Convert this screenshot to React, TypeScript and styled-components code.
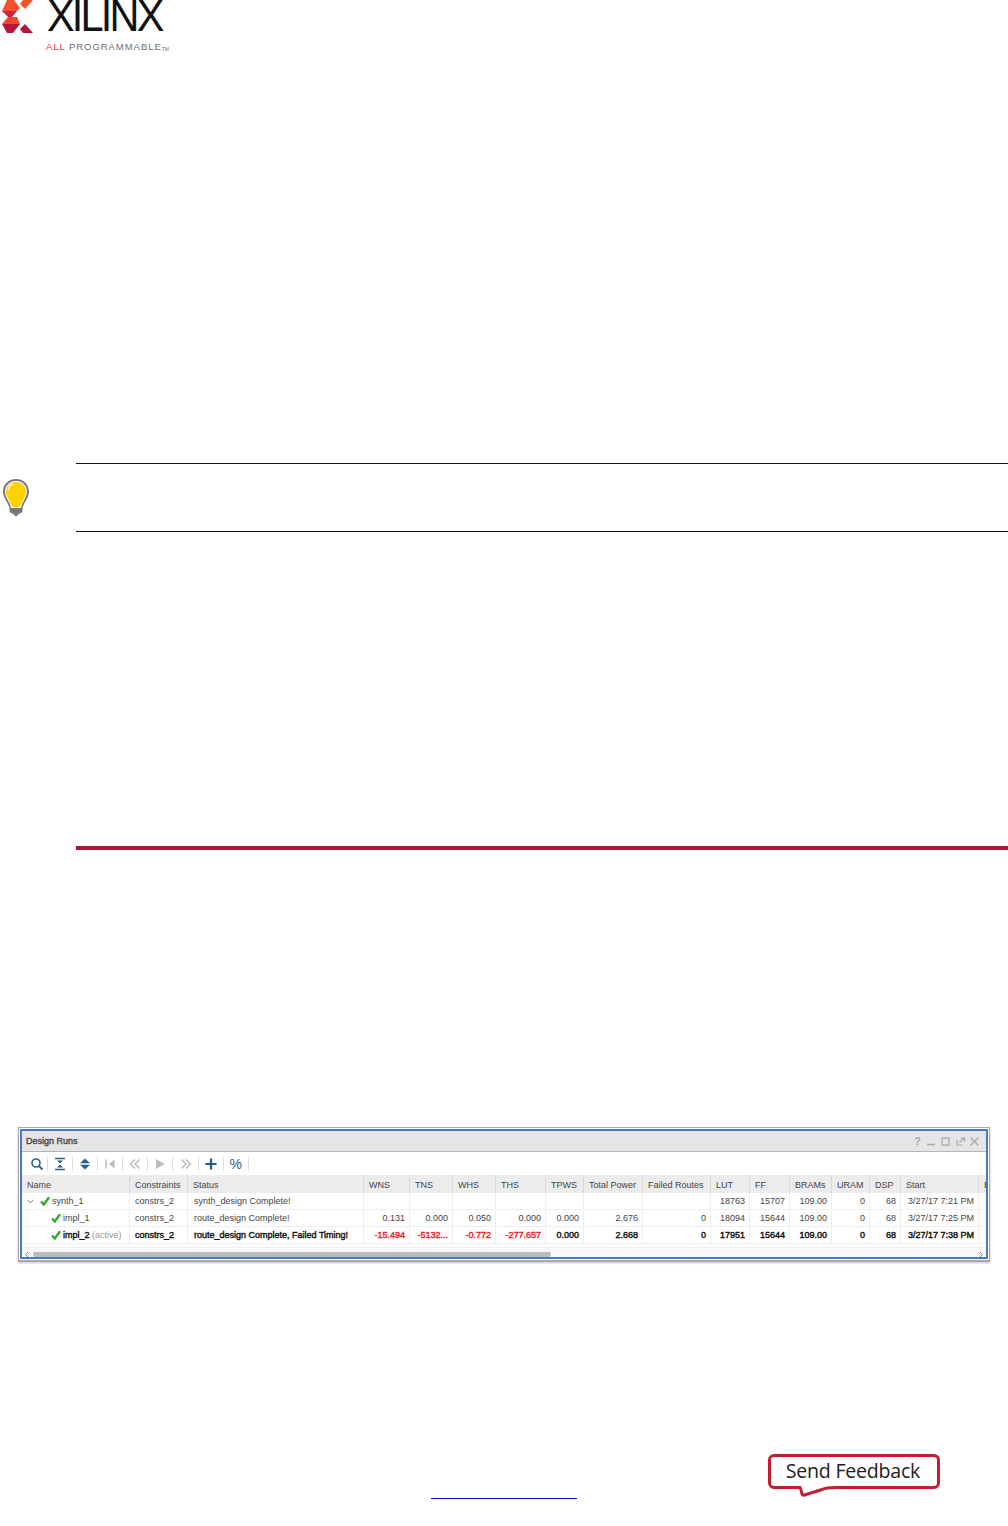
import React from "react";
import styled, { createGlobalStyle } from "styled-components";

const Global = createGlobalStyle`
  html, body { margin: 0; padding: 0; background: #fff; }
  body { font-family: "Liberation Sans", Arial, sans-serif; }
`;

const Page = styled.div`
  width: 1008px;
  height: 1526px;
  overflow: hidden;
  background: #fff;
  display: flex;
  flex-direction: column;
`;

const Header = styled.header`
  height: 52px;
  display: flex;
  align-items: flex-start;
  gap: 12px;
`;
const LogoMark = styled.svg`
  width: 34px;
  height: 34px;
  flex: none;
`;
const Wordmark = styled.div`
  width: 126px;
  display: flex;
  flex-direction: column;
`;
const LogoName = styled.div`
  font-size: 45px;
  line-height: 32px;
  height: 32px;
  letter-spacing: -3px;
  color: #111;
  white-space: nowrap;
  margin-left: 1px;
  transform: scaleX(0.92);
  transform-origin: left center;
`;
const LogoTag = styled.div`
  margin-top: 10px;
  font-size: 9.5px;
  line-height: 10px;
  letter-spacing: 0.95px;
  color: #6d6e71;
  white-space: nowrap;
`;
const TagRed = styled.span`color: #e8322c;`;
const TagTm = styled.span`font-size: 5px; vertical-align: -1px; letter-spacing: 0;`;

const Tip = styled.section`
  margin-top: 411px;
  display: flex;
  align-items: center;
`;
const TipIcon = styled.div`
  width: 76px;
  flex: none;
  padding-left: 2px;
  box-sizing: border-box;
  display: flex;
`;
const TipBox = styled.div`
  flex: 1;
  height: 67px;
  border-top: 1px solid #111;
  border-bottom: 1px solid #111;
`;

const RedRule = styled.hr`
  margin: 314px 0 0 76px;
  border: none;
  height: 4px;
  background: #b5123a;
`;

const WindowFrame = styled.section`
  margin: 277px 18px 0 18px;
  height: 135px;
  box-sizing: border-box;
  border: 1px solid #a9a9a9;
  border-bottom-width: 2px;
  padding: 1px;
  background: #fff;
  box-shadow: 0 1px 2px rgba(0,0,0,.25);
  display: flex;
`;
const WindowInner = styled.div`
  flex: 1;
  min-width: 0;
  border: 2px solid #4b78c4;
  display: flex;
  flex-direction: column;
  overflow: hidden;
  font-size: 9px;
  color: #333;
`;
const TitleBar = styled.div`
  height: 20px;
  flex: none;
  background: #e5e5e5;
  border-bottom: 1px solid #b5b5b5;
  display: flex;
  align-items: center;
  justify-content: space-between;
  padding: 0 6px 0 4px;
`;
const TitleText = styled.span`
  font-size: 9px;
  color: #444;
  -webkit-text-stroke: 0.35px currentColor;
`;
const WinButtons = styled.div`
  display: flex;
  align-items: center;
  gap: 3.3px;
`;
const WinIcon = styled.svg`
  width: 11px;
  height: 11px;
  display: block;
`;
const Toolbar = styled.div`
  height: 23px;
  flex: none;
  display: flex;
  align-items: center;
  padding-left: 4px;
`;
const ToolButton = styled.div<{ $w: number }>`
  width: ${(p) => p.$w}px;
  height: 14px;
  flex: none;
  box-sizing: border-box;
  border-right: 1px solid #dcdcdc;
  display: flex;
  align-items: center;
  justify-content: center;
`;
const ToolSvg = styled.svg`
  width: 14px;
  height: 14px;
  display: block;
`;

const COLS = "108px 58px 176px 46px 43px 43px 50px 38px 59px 68px 39px 40px 42px 38px 31px 78px 20px";

const Row = styled.div<{ $head?: boolean; $bold?: boolean }>`
  display: grid;
  grid-template-columns: ${COLS};
  height: ${(p) => (p.$head ? 18 : 16)}px;
  flex: none;
  background: ${(p) => (p.$head ? "#ececec" : "#fff")};
  border-bottom: ${(p) => (p.$head ? "0" : "1px solid #eeeeee")};
  color: ${(p) => (p.$bold ? "#111" : "#444")};
  -webkit-text-stroke: ${(p) => (p.$bold ? "0.4px currentColor" : "0")};
`;
const Cell = styled.div<{ $right?: boolean; $red?: boolean; $head?: boolean; $indent?: number }>`
  box-sizing: border-box;
  border-right: 1px solid ${(p) => (p.$head ? "#d8d8d8" : "#eeeeee")};
  padding: ${(p) => (p.$head ? 1 : 0)}px ${(p) => (p.$right ? 4 : 0)}px 0 ${(p) => (p.$right ? 0 : p.$indent ?? 5)}px;
  text-align: ${(p) => (p.$right ? "right" : "left")};
  color: ${(p) => (p.$red ? "#f01c24" : "inherit")};
  line-height: ${(p) => (p.$head ? 18 : 16)}px;
  white-space: nowrap;
  overflow: hidden;
  display: ${(p) => (p.$indent !== undefined ? "flex" : "block")};
  align-items: center;
  gap: 2px;
`;
const Caret = styled.svg`
  width: 7px;
  height: 7px;
  flex: none;
  margin-right: 4px;
`;
const Check = styled.svg`
  width: 10px;
  height: 10px;
  flex: none;
`;
const Muted = styled.span`
  color: #999;
  -webkit-text-stroke: 0;
`;

const ScrollBar = styled.div`
  height: 13px;
  flex: none;
  margin-top: 3px;
  background: #f9f9f9;
  border-top: 1px solid #eee;
  display: flex;
  align-items: center;
  justify-content: space-between;
  padding: 0 2px;
  color: #777;
`;
const Arrow = styled.svg`
  width: 5px;
  height: 7px;
  flex: none;
`;
const Track = styled.div`
  flex: 1;
  height: 5px;
  margin: 0 4px;
  display: flex;
`;
const Thumb = styled.div`
  width: 518px;
  height: 5px;
  background: #bdbdbd;
  border-radius: 2px;
`;

const Footer = styled.footer`
  margin: 192px 68px 0 431px;
  display: flex;
  align-items: flex-start;
  justify-content: space-between;
`;
const LinkLine = styled.a`
  display: block;
  width: 146px;
  height: 1px;
  margin-top: 44px;
  background: #0000e0;
`;
const Feedback = styled.div`
  position: relative;
  width: 172px;
  height: 35px;
  box-sizing: border-box;
  border: 3px solid #c21f33;
  border-radius: 6px;
  padding: 0 2px 3px 0;
  display: flex;
  align-items: center;
  justify-content: center;
  font-family: "Open Sans", "Noto Sans", sans-serif;
  font-size: 19.6px;
  letter-spacing: -0.25px;
  color: #222;
  background: #fff;
`;
const FeedbackTail = styled.svg`
  position: absolute;
  left: 25px;
  top: 28px;
  width: 46px;
  height: 14px;
`;

const Sep = ({ w, children }: { w: number; children: React.ReactNode }) => (
  <ToolButton $w={w}>
    <ToolSvg viewBox="0 0 14 14">{children}</ToolSvg>
  </ToolButton>
);

const GreenCheck = () => (
  <Check viewBox="0 0 10 10">
    <path d="M1 5.5 L3.8 8.5 L9 1.2" fill="none" stroke="#36a92e" strokeWidth="2.4" />
  </Check>
);

const HEADS = ["Name","Constraints","Status","WNS","TNS","WHS","THS","TPWS","Total Power","Failed Routes","LUT","FF","BRAMs","URAM","DSP","Start","Elapsed"];

export default function App() {
  return (
    <Page>
      <Global />
      <Header>
        <LogoMark viewBox="0 0 34 34">
          <path d="M7 0 H14 L20 8 L17 11 H2 Z" fill="#f2512b" />
          <path d="M2 11 H17 L12 17 H8 Z" fill="#c8233f" />
          <path d="M8 17 H17 L20 24 H2 Z" fill="#f0452a" />
          <path d="M2 24 H20 L13 33 H7 Z" fill="#b7163c" />
          <path d="M23 0 H33 L25 9 L20 4 Z" fill="#f2512b" />
          <path d="M25 24 L33 33 H23 L20 29 Z" fill="#b7163c" />
        </LogoMark>
        <Wordmark>
          <LogoName>XILINX</LogoName>
          <LogoTag>
            <TagRed>ALL</TagRed> PROGRAMMABLE<TagTm>TM</TagTm>
          </LogoTag>
        </Wordmark>
      </Header>

      <Tip>
        <TipIcon>
          <svg width="28" height="40" viewBox="0 0 28 40">
            <path d="M14 1 C6 1 1 7 1 13.5 C1 20 5.5 23 7.5 30 V34 L12 36.5 L14 39 L16 36.5 L20.5 34 V30 C22.5 23 27 20 27 13.5 C27 7 22 1 14 1 Z" fill="#77787b" />
            <path d="M14 3 C7.5 3 3 8 3 13.5 C3 19.5 7.5 22.5 9 30 H19 C20.5 22.5 25 19.5 25 13.5 C25 8 20.5 3 14 3 Z" fill="#fff" />
            <path d="M14 4 C8 4 4 8.5 4 13.5 C4 19 8 22 10 29 H18 C20 22 24 19 24 13.5 C24 8.5 20 4 14 4 Z" fill="#ffd000" />
            <path d="M6.5 12 C6.5 9 8.5 7 11 6.5" fill="none" stroke="#fff3b0" strokeWidth="1.6" strokeLinecap="round" />
          </svg>
        </TipIcon>
        <TipBox />
      </Tip>

      <RedRule />

      <WindowFrame>
        <WindowInner>
          <TitleBar>
            <TitleText>Design Runs</TitleText>
            <WinButtons>
              <WinIcon viewBox="0 0 11 11"><text x="2.5" y="9" fontSize="10" fontWeight="bold" fill="#aaa" fontFamily="Liberation Sans">?</text></WinIcon>
              <WinIcon viewBox="0 0 11 11"><path d="M1 8.5 H9" stroke="#aaa" strokeWidth="1.6" /></WinIcon>
              <WinIcon viewBox="0 0 11 11"><rect x="2" y="2" width="7" height="7" fill="none" stroke="#aaa" strokeWidth="1.3" /></WinIcon>
              <WinIcon viewBox="0 0 11 11"><path d="M2 4 V9 H7 M4.5 6.5 L9 2 M5.5 2 H9.5 V6" fill="none" stroke="#aaa" strokeWidth="1.2" /></WinIcon>
              <WinIcon viewBox="0 0 11 11"><path d="M1.5 1.5 L9.5 9.5 M9.5 1.5 L1.5 9.5" stroke="#aaa" strokeWidth="1.4" /></WinIcon>
            </WinButtons>
          </TitleBar>
          <Toolbar>
            <Sep w={22}><circle cx="6" cy="6" r="4" fill="none" stroke="#2a5f8f" strokeWidth="1.6" /><path d="M9 9 L12.5 12.5" stroke="#2a5f8f" strokeWidth="1.8" /></Sep>
            <Sep w={25}><path d="M2 1.5 H12 M2 12.5 H12" stroke="#2a5f8f" strokeWidth="1.3" /><path d="M4 3.5 H10 L7 6.5 Z M4 10.5 H10 L7 7.5 Z" fill="#2a5f8f" /></Sep>
            <Sep w={25}><path d="M7 1.5 L12 6.2 H2 Z M7 12.5 L12 7.8 H2 Z" fill="#2a5f8f" /></Sep>
            <Sep w={25}><path d="M3 2.5 V11.5" stroke="#bdbdbd" strokeWidth="1.6" /><path d="M11.5 2.5 V11.5 L6 7 Z" fill="#bdbdbd" /></Sep>
            <Sep w={25}><path d="M7 2.5 L2.5 7 L7 11.5 M11.5 2.5 L7 7 L11.5 11.5" fill="none" stroke="#bdbdbd" strokeWidth="1.6" /></Sep>
            <Sep w={25}><path d="M3 2 L11.5 7 L3 12 Z" fill="#bdbdbd" /></Sep>
            <Sep w={26}><path d="M2.5 2.5 L7 7 L2.5 11.5 M7 2.5 L11.5 7 L7 11.5" fill="none" stroke="#bdbdbd" strokeWidth="1.6" /></Sep>
            <Sep w={25}><path d="M7 1.5 V12.5 M1.5 7 H12.5" stroke="#1f5a8c" strokeWidth="2.2" /></Sep>
            <Sep w={25}><text x="0.5" y="12" fontSize="14" fill="#2a5f8f" fontFamily="Liberation Sans">%</text></Sep>
          </Toolbar>
          <Row $head>
            {HEADS.map((h) => (
              <Cell key={h} $head>{h}</Cell>
            ))}
          </Row>
          <Row>
            <Cell $indent={5}>
              <Caret viewBox="0 0 7 7"><path d="M1 2 L3.5 5 L6 2" fill="none" stroke="#888" strokeWidth="1" /></Caret>
              <GreenCheck />synth_1
            </Cell>
            <Cell>constrs_2</Cell>
            <Cell $indent={6}>synth_design Complete!</Cell>
            <Cell /><Cell /><Cell /><Cell /><Cell /><Cell /><Cell />
            <Cell $right>18763</Cell><Cell $right>15707</Cell><Cell $right>109.00</Cell><Cell $right>0</Cell><Cell $right>68</Cell><Cell $right>3/27/17 7:21 PM</Cell><Cell />
          </Row>
          <Row>
            <Cell $indent={29}><GreenCheck />impl_1</Cell>
            <Cell>constrs_2</Cell>
            <Cell $indent={6}>route_design Complete!</Cell>
            <Cell $right>0.131</Cell><Cell $right>0.000</Cell><Cell $right>0.050</Cell><Cell $right>0.000</Cell><Cell $right>0.000</Cell><Cell $right>2.676</Cell><Cell $right>0</Cell>
            <Cell $right>18094</Cell><Cell $right>15644</Cell><Cell $right>109.00</Cell><Cell $right>0</Cell><Cell $right>68</Cell><Cell $right>3/27/17 7:25 PM</Cell><Cell />
          </Row>
          <Row $bold>
            <Cell $indent={29}><GreenCheck /><span>impl_2 <Muted>(active)</Muted></span></Cell>
            <Cell>constrs_2</Cell>
            <Cell $indent={6}>route_design Complete, Failed Timing!</Cell>
            <Cell $right $red>-15.494</Cell><Cell $right $red>-5132...</Cell><Cell $right $red>-0.772</Cell><Cell $right $red>-277.657</Cell><Cell $right>0.000</Cell><Cell $right>2.668</Cell><Cell $right>0</Cell>
            <Cell $right>17951</Cell><Cell $right>15644</Cell><Cell $right>109.00</Cell><Cell $right>0</Cell><Cell $right>68</Cell><Cell $right>3/27/17 7:38 PM</Cell><Cell />
          </Row>
          <ScrollBar>
            <Arrow viewBox="0 0 5 7"><path d="M4 1 L1.5 3.5 L4 6" fill="none" stroke="#777" /></Arrow>
            <Track><Thumb /></Track>
            <Arrow viewBox="0 0 5 7"><path d="M1 1 L3.5 3.5 L1 6" fill="none" stroke="#777" /></Arrow>
          </ScrollBar>
        </WindowInner>
      </WindowFrame>

      <Footer>
        <LinkLine />
        <Feedback>
          Send Feedback
          <FeedbackTail viewBox="0 0 46 14">
            <path d="M5 0 H38 V2.5 Q30 2.5 26 4.5 L8.5 10 L6 9 Z" fill="#fff" />
            <path d="M0 2.5 H2 Q4.5 2.5 5 5 L6 9 Q6.5 10.5 8.5 10 L26 4.5 Q30 2.5 40 2.5 H46" fill="none" stroke="#c21f33" strokeWidth="3" />
          </FeedbackTail>
        </Feedback>
      </Footer>
    </Page>
  );
}
